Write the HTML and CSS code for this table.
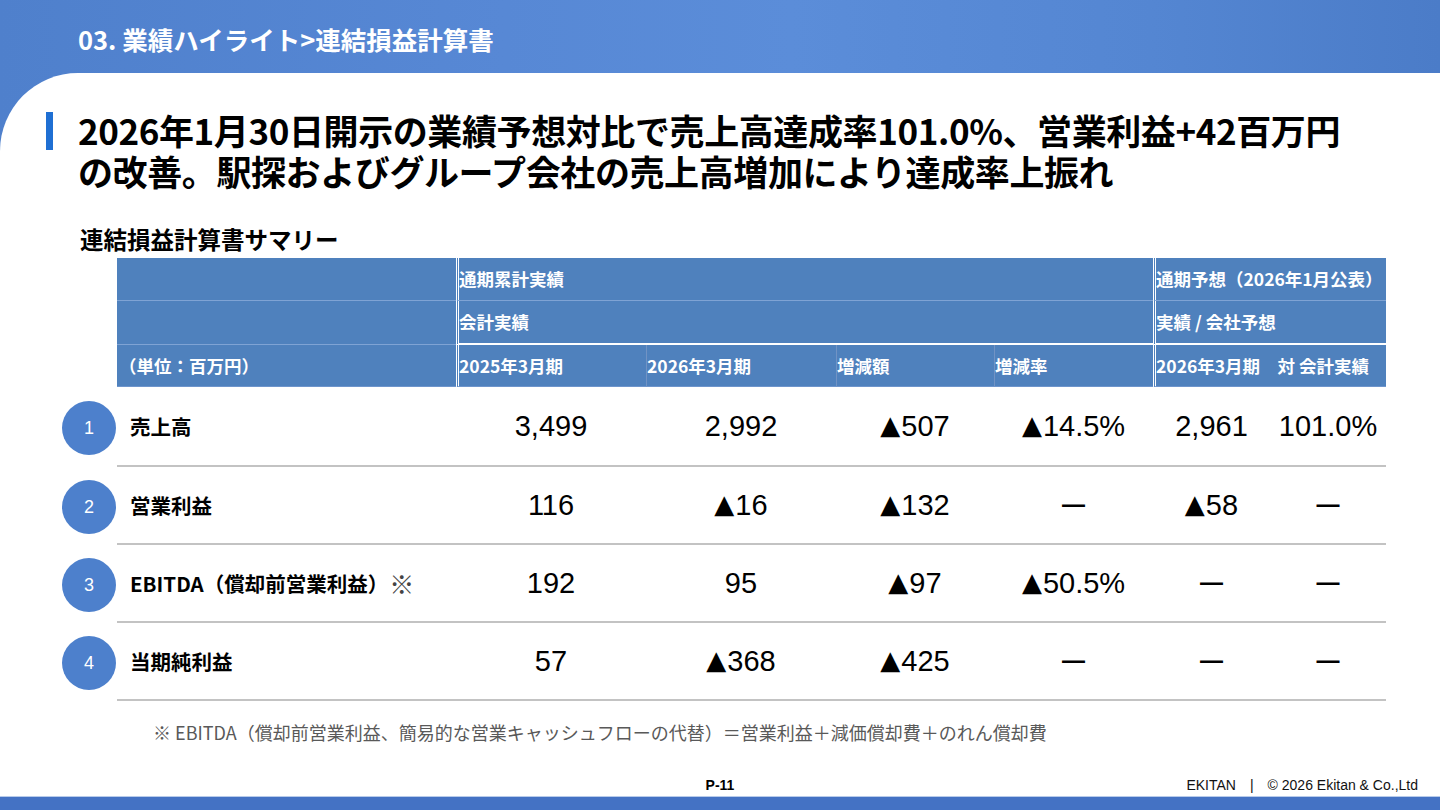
FILE: index.html
```html
<!DOCTYPE html>
<html lang="ja">
<head>
<meta charset="utf-8">
<title>連結損益計算書</title>
<link rel="stylesheet" href="styles.css">
</head>
<body>
<div class="slide">
  <header class="banner">
    <h1 class="crumb">03. 業績ハイライト&gt;連結損益計算書</h1>
  </header>
  <main class="sheet">
    <div class="headline">
      <span class="bar"></span>
      <h2>2026年1月30日開示の業績予想対比で売上高達成率101.0%、営業利益+42百万円<br>の改善。駅探およびグループ会社の売上高増加により達成率上振れ</h2>
    </div>
    <h3 class="subtitle">連結損益計算書サマリー</h3>
    <table class="pl">
      <colgroup>
        <col class="c-badge"><col class="c-name"><col class="c-wide"><col class="c-wide"><col class="c-mid"><col class="c-mid2"><col class="c-f1"><col class="c-f2">
      </colgroup>
      <thead>
        <tr class="h1">
          <th class="blank"></th>
          <th class="hd"></th>
          <th class="hd sect" colspan="4">通期累計実績</th>
          <th class="hd sect" colspan="2">通期予想（2026年1月公表）</th>
        </tr>
        <tr class="h2">
          <th class="blank"></th>
          <th class="hd"></th>
          <th class="hd sect under" colspan="4">会計実績</th>
          <th class="hd sect under" colspan="2">実績 / 会社予想</th>
        </tr>
        <tr class="h3">
          <th class="blank"></th>
          <th class="hd unit">（単位：百万円）</th>
          <th class="hd sect">2025年3月期</th>
          <th class="hd thin">2026年3月期</th>
          <th class="hd thin">増減額</th>
          <th class="hd thin">増減率</th>
          <th class="hd sect" colspan="2">2026年3月期　対 会計実績</th>
        </tr>
      </thead>
      <tbody>
        <tr>
          <td class="badge-cell"><span class="badge">1</span></td>
          <td class="name">売上高</td>
          <td class="v">3,499</td>
          <td class="v">2,992</td>
          <td class="v"><span class="tri">▲</span>507</td>
          <td class="v"><span class="tri">▲</span>14.5%</td>
          <td class="v">2,961</td>
          <td class="v">101.0%</td>
        </tr>
        <tr>
          <td class="badge-cell"><span class="badge">2</span></td>
          <td class="name">営業利益</td>
          <td class="v">116</td>
          <td class="v"><span class="tri">▲</span>16</td>
          <td class="v"><span class="tri">▲</span>132</td>
          <td class="v"><span class="dash">—</span></td>
          <td class="v"><span class="tri">▲</span>58</td>
          <td class="v"><span class="dash">—</span></td>
        </tr>
        <tr>
          <td class="badge-cell"><span class="badge">3</span></td>
          <td class="name">EBITDA（償却前営業利益）<span class="mark">※</span></td>
          <td class="v">192</td>
          <td class="v">95</td>
          <td class="v"><span class="tri">▲</span>97</td>
          <td class="v"><span class="tri">▲</span>50.5%</td>
          <td class="v"><span class="dash">—</span></td>
          <td class="v"><span class="dash">—</span></td>
        </tr>
        <tr>
          <td class="badge-cell"><span class="badge">4</span></td>
          <td class="name">当期純利益</td>
          <td class="v">57</td>
          <td class="v"><span class="tri">▲</span>368</td>
          <td class="v"><span class="tri">▲</span>425</td>
          <td class="v"><span class="dash">—</span></td>
          <td class="v"><span class="dash">—</span></td>
          <td class="v"><span class="dash">—</span></td>
        </tr>
      </tbody>
    </table>
    <p class="note">※ EBITDA（償却前営業利益、簡易的な営業キャッシュフローの代替）＝営業利益＋減価償却費＋のれん償却費</p>
    <footer class="foot">
      <span></span>
      <span class="page">P-11</span>
      <span class="copy">EKITAN　|　© 2026 Ekitan &amp; Co.,Ltd</span>
    </footer>
  </main>
  <div class="bottom-bar"></div>
</div>
</body>
</html>
```

FILE: styles.css
```css
html, body {
  margin: 0;
  padding: 0;
}

body {
  font-family: "Noto Sans CJK JP", "Noto Sans", sans-serif;
  color: #000;
  background: #fff;
}

.slide {
  width: 1440px;
  height: 810px;
  overflow: hidden;
  display: flex;
  flex-direction: column;
  background: linear-gradient(90deg, #4f80cc 0%, #5788d5 35%, #5b8dd9 55%, #5486d2 80%, #4b7cc8 100%);
}

.banner {
  height: 73px;
  flex: none;
  box-sizing: border-box;
  padding: 4px 0 0 78px;
  display: flex;
  align-items: center;
}

.crumb {
  margin: 0;
  color: #fff;
  font-size: 25.5px;
  line-height: 30px;
  font-weight: 700;
}

.sheet {
  flex: 1;
  background: #fff;
  border-top-left-radius: 78px;
  display: flex;
  flex-direction: column;
  min-height: 0;
}

.headline {
  display: flex;
  align-items: flex-start;
  gap: 25px;
  padding: 36px 0 0 46px;
}

.bar {
  flex: none;
  width: 7px;
  height: 38px;
  margin-top: 3px;
  background: #1f6fd3;
}

.headline h2 {
  margin: 0;
  font-size: 35px;
  line-height: 41px;
  font-weight: 700;
  letter-spacing: -0.4px;
}

.subtitle {
  margin: 33px 0 0 80px;
  font-size: 23.5px;
  line-height: 30px;
  font-weight: 700;
}

.pl {
  margin: 4px 0 0 62px;
  width: 1324px;
  table-layout: fixed;
  border-collapse: separate;
  border-spacing: 0;
}

.c-badge { width: 55px; }
.c-name { width: 339px; }
.c-wide { width: 190px; }
.c-mid { width: 158px; }
.c-mid2 { width: 159px; }
.c-f1 { width: 117px; }
.c-f2 { width: 116px; }

.pl th {
  padding: 0;
  font-weight: 700;
  text-align: left;
}

.blank {
  background: #fff;
}

.hd {
  background: #4f81bd;
  color: #fff;
  font-size: 17.5px;
  line-height: 20px;
  white-space: nowrap;
  border-bottom: 1px solid #7fa3d4;
  padding-left: 1px;
}

.h1 .hd { height: 42px; }
.h2 .hd { height: 42px; }
.h3 .hd { height: 41px; border-bottom: 1px solid #6e95cc; }

.hd.sect {
  border-left: 3px double #fff;
}

.hd.under {
  border-bottom: 2px solid #fff;
}

.hd.thin {
  border-left: 1px solid #7193c4;
}

.hd.unit {
  padding-left: 2px;
}

.pl td {
  padding: 0;
  height: 76px;
  border-bottom: 2px solid #c3c3c3;
  vertical-align: middle;
}

.pl tbody tr:first-child td {
  height: 78px;
}

.pl td.badge-cell {
  border-bottom: none;
  background: #fff;
}

.badge {
  display: flex;
  align-items: center;
  justify-content: center;
  width: 54px;
  height: 54px;
  border-radius: 50%;
  background: #4d80cc;
  color: #fff;
  font-family: "Liberation Sans", sans-serif;
  font-size: 18px;
  margin-top: 2px;
}

.name {
  font-size: 20.5px;
  font-weight: 700;
  padding-left: 13px !important;
  white-space: nowrap;
}

.mark {
  font-size: 25px;
  font-weight: 400;
  color: #444;
  margin-left: 1px;
  vertical-align: -2px;
}

.v {
  text-align: center;
  font-family: "Liberation Sans", sans-serif;
  font-size: 29px;
  white-space: nowrap;
}

.tri {
  font-family: "DejaVu Sans", sans-serif;
  font-size: 26px;
  position: relative;
  top: -2px;
  margin-right: 1px;
}

.dash {
  font-family: "Liberation Sans", sans-serif;
  font-weight: 700;
  font-size: 23px;
  position: relative;
  top: -3px;
}

.note {
  margin: 19px 0 0 153px;
  font-size: 18px;
  line-height: 24px;
  color: #595959;
}

.foot {
  margin-top: auto;
  height: 20px;
  margin-bottom: 1px;
  display: grid;
  grid-template-columns: 1fr auto 1fr;
  align-items: center;
  font-family: "Liberation Sans", sans-serif;
  font-size: 14px;
  line-height: 20px;
}

.page {
  font-weight: 700;
}

.copy {
  justify-self: end;
  padding-right: 22px;
  color: #111;
}

.bottom-bar {
  flex: none;
  height: 13px;
  background: #4472c4;
  border-top: 1px solid #b8cbea;
}
```
